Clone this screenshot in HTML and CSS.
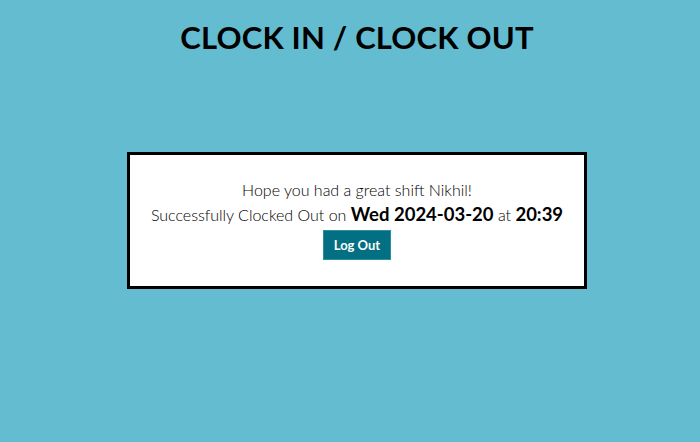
FILE: index.html
```html
<!DOCTYPE html>
<html>
<head>
<meta charset="utf-8">
<link rel="stylesheet" href="styles.css">
</head>
<body>
<div class="page">
  <h1 class="title">CLOCK IN / CLOCK OUT</h1>
  <div class="card">
    <p class="line">Hope you had a great shift Nikhil!</p>
    <p class="line">Successfully Clocked Out on <strong class="big">Wed 2024-03-20</strong> at <strong class="big">20:39</strong></p>
    <button class="btn">Log Out</button>
  </div>
</div>
</body>
</html>
```
FILE: styles.css
```css
html, body {
  margin: 0;
  padding: 0;
  background: #63bcd0;
  height: 100%;
}
.page {
  font-family: Lato, "Noto Sans", sans-serif;
  display: flex;
  flex-direction: column;
  align-items: center;
  color: #000;
  padding-left: 14px;
}
.title {
  margin: 19px 0 0 0;
  font-size: 31px;
  font-weight: 700;
  line-height: 36px;
  letter-spacing: 0.2px;
}
.card {
  margin-top: 97px;
  background: #fff;
  border: 3px solid #000;
  display: flex;
  flex-direction: column;
  align-items: center;
  padding-top: 22px;
  box-sizing: border-box;
  height: 137px;
  width: 460px;
}
.line {
  margin: 0;
  font-size: 16px;
  font-weight: 300;
  line-height: 25px;
  color: #000;
}
.big {
  font-size: 18.5px;
  font-weight: 700;
}
.btn {
  margin-top: 3px;
  width: 68px;
  height: 30px;
  background: #036f82;
  color: #fff;
  border: 1px solid #2c8fa0;
  font-family: Lato, "Noto Sans", sans-serif;
  font-weight: 700;
  font-size: 13px;
  padding: 0;
}
```
